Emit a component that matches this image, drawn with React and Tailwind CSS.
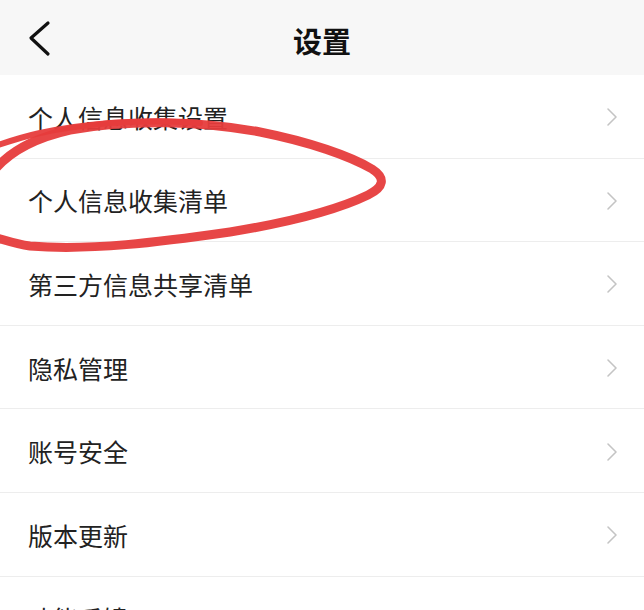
import React from "react";

const items = [
  "个人信息收集设置",
  "个人信息收集清单",
  "第三方信息共享清单",
  "隐私管理",
  "账号安全",
  "版本更新",
  "功能反馈",
];

function Chevron() {
  return (
    <svg width="12" height="20" viewBox="0 0 12 20" fill="none">
      <path d="M2 2 L10 10 L2 18" stroke="#c4c4c4" strokeWidth="1.6" strokeLinecap="round" strokeLinejoin="round" />
    </svg>
  );
}

export default function App() {
  return (
    <div
      className="relative w-[644px] h-[610px] overflow-hidden bg-white"
      style={{ fontFamily: '"Noto Sans CJK SC", "Noto Sans", sans-serif' }}
    >
      <div className="relative h-[75px] bg-[#f7f7f7] flex items-center justify-center pt-[6px]">
        <div className="absolute left-[27px] top-[20px]">
          <svg width="26" height="38" viewBox="0 0 26 38" fill="none">
            <path d="M21 3 L4 18 L21 34" stroke="#111" strokeWidth="3.2" strokeLinecap="round" strokeLinejoin="round" />
          </svg>
        </div>
        <span className="text-[29px] font-bold text-[#111] leading-none">设置</span>
      </div>
      <div className="flex flex-col">
        {items.map((t) => (
          <div
            key={t}
            className="h-[83.6px] shrink-0 flex items-center justify-between pl-[28px] pr-[26px] pt-[2px] border-b border-[#ededed]"
          >
            <span className="text-[25px] text-[#222] leading-none">{t}</span>
            <Chevron />
          </div>
        ))}
      </div>
      <svg
        className="absolute left-0 top-0 pointer-events-none"
        width="644"
        height="610"
        viewBox="0 0 644 610"
        fill="none"
      >
        <path
          d="M -10,176 C 5,154 30,139 70,130 C 130,119 200,121 260,132 C 310,142 350,156 372,169 C 386,178 384,187 368,195 C 335,211 285,223 230,232 C 160,242 90,251 30,246 C 15,244 5,240 -10,236"
          stroke="#e63c3c"
          strokeWidth="9"
          strokeLinecap="round"
          strokeLinejoin="round"
          opacity="0.95"
        />
        <path
          d="M -10,148 C 20,137 50,128 110,123 C 140,121 170,121 200,123"
          stroke="#e63c3c"
          strokeWidth="6"
          strokeLinecap="round"
          opacity="0.95"
        />
      </svg>
    </div>
  );
}
